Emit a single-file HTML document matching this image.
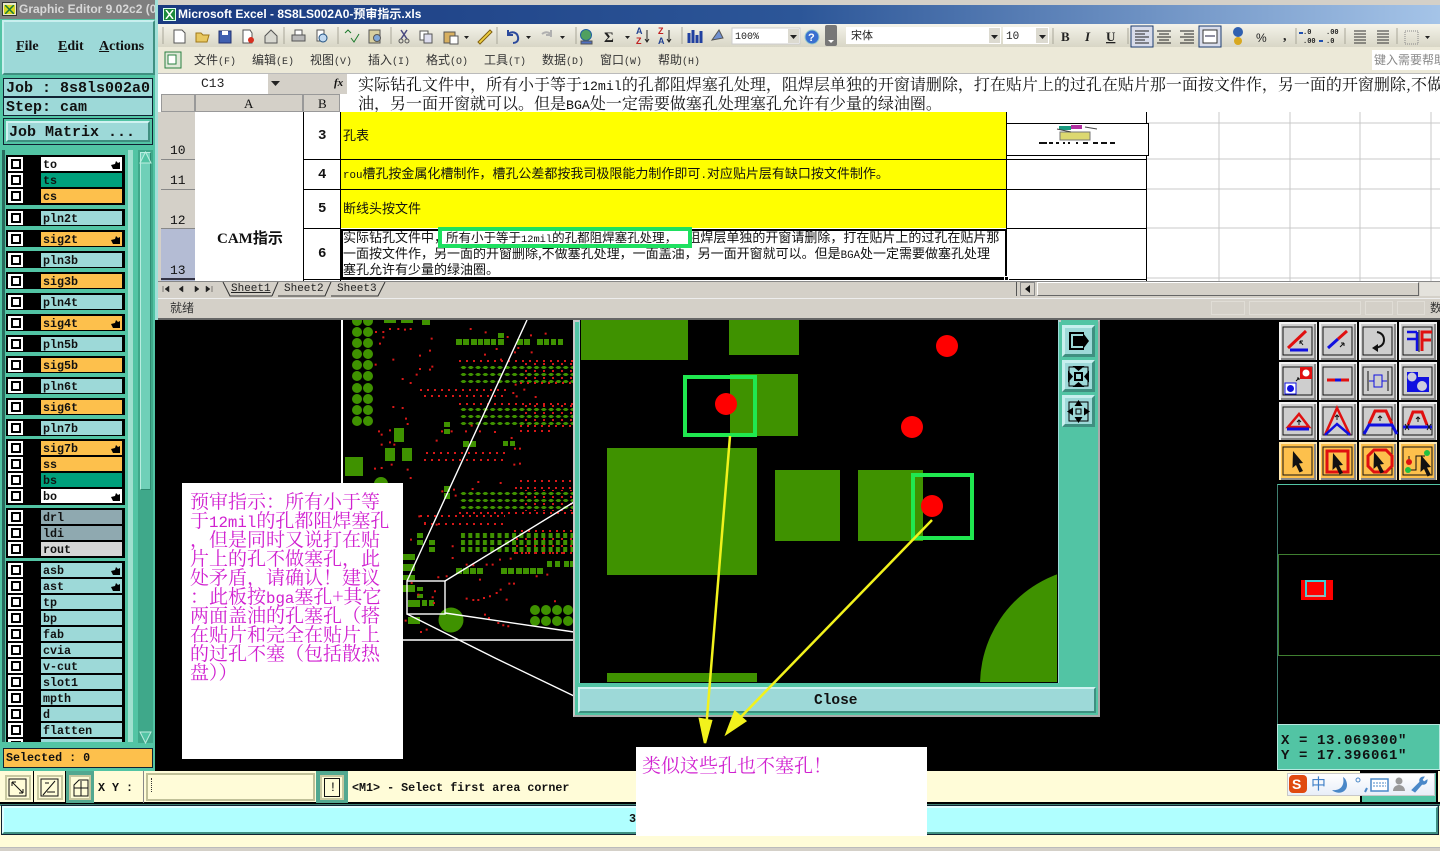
<!DOCTYPE html>
<html><head><meta charset="utf-8"><style>
html,body{margin:0;padding:0;background:#000}
#r{position:relative;width:1440px;height:851px;overflow:hidden;background:#000;font-family:"Liberation Mono",monospace}
#r div,#r span.a,#r svg.a{position:absolute;box-sizing:border-box}
.m{font-family:"Liberation Mono",monospace;font-weight:bold;color:#111;white-space:pre}
.c{font-family:"Liberation Serif","Noto Serif CJK SC",serif;color:#111;white-space:nowrap}
.s{font-family:"Liberation Sans","Noto Sans CJK SC",sans-serif;color:#222;white-space:nowrap}
i.l{font-style:normal;font-family:"Liberation Mono",monospace;font-size:.83em;line-height:0}
.cb{left:2px;width:15px;height:14px;background:#fff}
.cb:after{content:"";position:absolute;left:3px;top:2px;width:10px;height:10px;border:2px solid #000;box-sizing:border-box;background:#fff}
.lb{left:35px;width:81px;height:14px;font:bold 11.7px/16px "Liberation Mono",monospace;color:#111;padding-left:2px;white-space:pre;background:#9dd9d8;overflow:hidden}
.g{left:6px;width:119px;background:#000}
.or{background:#fdc04c!important}.wh{background:#fff!important}.gr{background:#00a07c!important}.gy{background:#8fa9b0!important}.lg{background:#d6d6d6!important}
.hd{position:absolute;right:2px;top:3px;width:9px;height:9px}
.t12{font-size:12px;line-height:16px;font-family:'Noto Sans CJK SC',sans-serif;color:#333}
.t13{font-size:13px;line-height:16px;font-family:'Noto Sans CJK SC',sans-serif;color:#111}
</style></head><body><div id="r">

<!-- LEFT PANEL -->
<div style="left:0;top:0;width:158px;height:771px;background:#52c4a4"></div>
<div style="left:0;top:0;width:158px;height:19px;background:#7f7f7f"></div>
<div style="left:2px;top:2px;width:15px;height:14px;background:#e8e8c8;border:1px solid #333"></div>
<div class="s" style="left:4px;top:5px;width:11px;height:9px;background:#d8d820"></div>
<svg class="a" style="left:5px;top:5px" width="9" height="9"><path d="M0 0l9 9M9 0L0 9" stroke="#1a7a3a" stroke-width="1.500"/></svg>
<div class="s" style="left:19px;top:1px;font:bold 12px/17px 'Liberation Sans',sans-serif;color:#d8d8d8;width:137px;overflow:hidden">Graphic Editor 9.02c2 (0</div>
<div style="left:2px;top:20px;width:153px;height:55px;background:#9dd9d8;border:2px solid;border-color:#c8efee #3f8f80 #3f8f80 #c8efee"></div>
<div class="c" style="left:16px;top:38px;font-size:14px;font-weight:bold;line-height:18px"><u>F</u>ile</div>
<div class="c" style="left:58px;top:38px;font-size:14px;font-weight:bold;line-height:18px"><u>E</u>dit</div>
<div class="c" style="left:99px;top:38px;font-size:14px;font-weight:bold;line-height:18px"><u>A</u>ctions</div>
<div style="left:3px;top:78px;width:150px;height:19px;background:#9dd9d8;border:1px solid #123"></div>
<div class="m" style="left:6px;top:79px;font-size:15px;line-height:19px">Job : 8s8ls002a0</div>
<div style="left:3px;top:97px;width:150px;height:19px;background:#9dd9d8;border:1px solid #123"></div>
<div class="m" style="left:6px;top:98px;font-size:15px;line-height:19px">Step: cam</div>
<div style="left:3px;top:118px;width:150px;height:27px;background:#52c4a4;border:1px solid #123"></div>
<div style="left:6px;top:121px;width:144px;height:21px;background:#9dd9d8;border:2px solid;border-color:#d0f2f1 #3f8f80 #3f8f80 #d0f2f1"></div>
<div class="m" style="left:9px;top:123px;font-size:15px;line-height:19px">Job Matrix ...</div>

<div style="left:2px;top:150px;width:3px;height:592px;background:#2a6a5e"></div>
<div style="left:128px;top:150px;width:5px;height:592px;background:#9fe0cf"></div>
<div style="left:138px;top:150px;width:15px;height:593px;background:#3fa88a"></div>
<div style="left:140px;top:152px;width:11px;height:338px;background:#6fd0b8;border:1px solid;border-color:#b8eee0 #2d8a70 #2d8a70 #b8eee0"></div>
<svg class="a" style="left:139px;top:151px" width="13" height="13"><path d="M6.5 1L12 12H1z" fill="#52c4a4" stroke="#bdeee0"/></svg>
<svg class="a" style="left:139px;top:731px" width="13" height="13"><path d="M6.5 12L12 1H1z" fill="#52c4a4" stroke="#bdeee0"/></svg>

<div style="left:0;top:150px;width:126px;height:592px;overflow:hidden">
<div class="g" style="top:5px;height:50px"><div class="cb" style="top:2px"></div><div class="lb wh" style="top:2px">to<svg class="hd" viewBox="0 0 9 9"><path d="M0 5l4-1 1-3 2 2 2-1v7H2z"/></svg></div><div class="cb" style="top:18px"></div><div class="lb gr" style="top:18px">ts</div><div class="cb" style="top:34px"></div><div class="lb or" style="top:34px">cs</div></div>
<div class="g" style="top:59px;height:17px"><div class="cb" style="top:2px"></div><div class="lb" style="top:2px">pln2t</div></div>
<div class="g" style="top:80px;height:17px"><div class="cb" style="top:2px"></div><div class="lb or" style="top:2px">sig2t<svg class="hd" viewBox="0 0 9 9"><path d="M0 5l4-1 1-3 2 2 2-1v7H2z"/></svg></div></div>
<div class="g" style="top:101px;height:17px"><div class="cb" style="top:2px"></div><div class="lb" style="top:2px">pln3b</div></div>
<div class="g" style="top:122px;height:17px"><div class="cb" style="top:2px"></div><div class="lb or" style="top:2px">sig3b</div></div>
<div class="g" style="top:143px;height:17px"><div class="cb" style="top:2px"></div><div class="lb" style="top:2px">pln4t</div></div>
<div class="g" style="top:164px;height:17px"><div class="cb" style="top:2px"></div><div class="lb or" style="top:2px">sig4t<svg class="hd" viewBox="0 0 9 9"><path d="M0 5l4-1 1-3 2 2 2-1v7H2z"/></svg></div></div>
<div class="g" style="top:185px;height:17px"><div class="cb" style="top:2px"></div><div class="lb" style="top:2px">pln5b</div></div>
<div class="g" style="top:206px;height:17px"><div class="cb" style="top:2px"></div><div class="lb or" style="top:2px">sig5b</div></div>
<div class="g" style="top:227px;height:17px"><div class="cb" style="top:2px"></div><div class="lb" style="top:2px">pln6t</div></div>
<div class="g" style="top:248px;height:17px"><div class="cb" style="top:2px"></div><div class="lb or" style="top:2px">sig6t</div></div>
<div class="g" style="top:269px;height:17px"><div class="cb" style="top:2px"></div><div class="lb" style="top:2px">pln7b</div></div>
<div class="g" style="top:289px;height:66px"><div class="cb" style="top:2px"></div><div class="lb or" style="top:2px">sig7b<svg class="hd" viewBox="0 0 9 9"><path d="M0 5l4-1 1-3 2 2 2-1v7H2z"/></svg></div><div class="cb" style="top:18px"></div><div class="lb or" style="top:18px">ss</div><div class="cb" style="top:34px"></div><div class="lb gr" style="top:34px">bs</div><div class="cb" style="top:50px"></div><div class="lb wh" style="top:50px">bo<svg class="hd" viewBox="0 0 9 9"><path d="M0 5l4-1 1-3 2 2 2-1v7H2z"/></svg></div></div>
<div class="g" style="top:358px;height:50px"><div class="cb" style="top:2px"></div><div class="lb gy" style="top:2px">drl</div><div class="cb" style="top:18px"></div><div class="lb gy" style="top:18px">ldi</div><div class="cb" style="top:34px"></div><div class="lb lg" style="top:34px">rout</div></div>
<div class="g" style="top:411px;height:190px">
<div class="cb" style="top:2px"></div><div class="lb" style="top:2px">asb<svg class="hd" viewBox="0 0 9 9"><path d="M0 5l4-1 1-3 2 2 2-1v7H2z"/></svg></div>
<div class="cb" style="top:18px"></div><div class="lb" style="top:18px">ast<svg class="hd" viewBox="0 0 9 9"><path d="M0 5l4-1 1-3 2 2 2-1v7H2z"/></svg></div>
<div class="cb" style="top:34px"></div><div class="lb" style="top:34px">tp</div>
<div class="cb" style="top:50px"></div><div class="lb" style="top:50px">bp</div>
<div class="cb" style="top:66px"></div><div class="lb" style="top:66px">fab</div>
<div class="cb" style="top:82px"></div><div class="lb" style="top:82px">cvia</div>
<div class="cb" style="top:98px"></div><div class="lb" style="top:98px">v-cut</div>
<div class="cb" style="top:114px"></div><div class="lb" style="top:114px">slot1</div>
<div class="cb" style="top:130px"></div><div class="lb" style="top:130px">mpth</div>
<div class="cb" style="top:146px"></div><div class="lb" style="top:146px">d</div>
<div class="cb" style="top:162px"></div><div class="lb" style="top:162px">flatten</div>
<div class="cb" style="top:178px"></div><div class="lb" style="top:178px"></div>
</div></div>
<div style="left:3px;top:748px;width:150px;height:20px;background:#fdc04c;border:1px solid #123"></div>
<div class="m" style="left:6px;top:749px;font-size:11.7px;line-height:19px">Selected : 0</div>

<!-- EXCEL -->
<div style="left:155px;top:0;width:1285px;height:320px;background:#d4d0c8"></div>
<div style="left:155px;top:0;width:3px;height:320px;background:#a0e0d8"></div>
<div style="left:158px;top:5px;width:1282px;height:19px;background:linear-gradient(90deg,#1a3a80 0%,#2c5698 50%,#a5c4e8 100%)"></div>
<div style="left:163px;top:8px;width:13px;height:13px;background:#1d8a3c;border:1px solid #dfe"></div>
<svg class="a" style="left:165px;top:10px" width="9" height="9"><path d="M1 0l7 9M8 0L1 9" stroke="#fff" stroke-width="1.500"/></svg>
<div class="s" style="left:178px;top:6px;color:#fff;font-size:12px;line-height:17px;font-weight:bold">Microsoft Excel - 8S8LS002A0-预审指示.xls</div>
<div style="left:158px;top:24px;width:1282px;height:23px;background:linear-gradient(#f4f3ea,#d8d6c6)"></div>
<div style="left:158px;top:47px;width:1282px;height:26px;background:#ece9d8"></div>
<svg class="a" style="left:158px;top:24px" width="1282" height="50" viewBox="158 24 1282 50">
<g fill="none" stroke="#555" stroke-width="1">
<path d="M174 30h8l3 3v10h-11z" fill="#fff"/>
<path d="M196 42V33h5l2 2h6l-2 7z" fill="#e8c860" stroke="#a07818"/>
<rect x="219" y="31" width="12" height="12" fill="#4060b0" stroke="#203070"/><rect x="222" y="31" width="6" height="4" fill="#fff" stroke="none"/>
<path d="M243 30h7l2 3v10h-9z" fill="#fff"/><circle cx="251" cy="40" r="3" fill="#d83020" stroke="none"/>
<path d="M265 36l6-6 6 6v7h-12z" fill="#d8d8d0"/>
<rect x="292" y="35" width="13" height="6" fill="#b8b8b8"/><rect x="295" y="30" width="7" height="5" fill="#fff"/>
<path d="M317 30h7v11h-7z" fill="#fff"/><circle cx="323" cy="38" r="4" fill="#c0d8f0" stroke="#205080"/>
<path d="M345 33l3-3 3 3M351 38l3 4 5-8" stroke="#1c7a2c"/>
<rect x="369" y="30" width="11" height="13" fill="#d8d0a0"/><circle cx="377" cy="38" r="3.5" fill="#80a8d8"/>
<path d="M401 30l6 9M407 30l-6 9" stroke="#4a4a80" stroke-width="1.5"/><circle cx="401" cy="41" r="2"/><circle cx="407" cy="41" r="2"/>
<rect x="420" y="31" width="8" height="9" fill="#fff"/><rect x="424" y="34" width="8" height="9" fill="#dde"/>
<rect x="444" y="32" width="11" height="11" fill="#d8b060"/><rect x="450" y="36" width="8" height="8" fill="#fff"/>
<path d="M478 42l4-4 8-8 2 2-8 8-4 4z" fill="#f0d040" stroke="#806010"/>
<path d="M508 34c4-3 9-2 10 3s-3 6-5 6M508 30v5h5" stroke="#2c4a9c" stroke-width="2"/>
<path d="M542 34c4-3 9-2 9 3M551 30v5h-5" stroke="#b0b0b0" stroke-width="2"/>
<circle cx="586" cy="35" r="5.5" fill="#50a060" stroke="#2060a0"/><rect x="581" y="41" width="11" height="3" fill="#5070c0"/>
<path d="M689 43V33M693 43V30M697 43V35M701 43V31" stroke="#2040a0" stroke-width="3"/>
<path d="M712 40l7-10 4 8z" fill="#7090d0"/>
</g>
<g fill="#222" font-family="Liberation Serif" font-weight="bold" font-size="15"><text x="604" y="42">Σ</text></g>
<g font-family="Liberation Sans" font-size="9" fill="#204090" font-weight="bold"><text x="636" y="34">A</text><text x="636" y="44" fill="#c02020">Z</text><text x="658" y="34" fill="#c02020">Z</text><text x="658" y="44">A</text></g>
<path d="M647 30v12M645 39l2 3 2-3M669 30v12M667 39l2 3 2-3" stroke="#222" fill="none"/>
<g fill="#222"><path d="M464 36h5l-2.500 3zM526 36h5l-2.500 3zM560 36h5l-2.500 3zM625 36h5l-2.500 3zM1425 36h5l-2.500 3z"/></g>
<g stroke="#a8a698"><path d="M163 27v17M284 27v17M338 27v17M391 27v17M497 27v17M576 27v17M682 27v17M1053 28v16M1128 28v16M1220 28v16M1296 28v16M1345 28v16M1397 28v16"/></g>
<rect x="732" y="28" width="68" height="16" fill="#fff" stroke="#ccc"/><rect x="788" y="29" width="11" height="14" fill="#dcdad0"/><path d="M790 35h7l-3.500 4z" fill="#222"/>
<text x="735" y="39" font-family="Liberation Mono" font-size="10" fill="#222">100%</text>
<circle cx="812" cy="37" r="7" fill="#3a70d0" stroke="#9cc"/><text x="808" y="41" font-family="Liberation Sans" font-weight="bold" font-size="11" fill="#fff">?</text>
<rect x="825" y="25" width="12" height="21" rx="2" fill="#777"/><path d="M828 40h6l-3 3z" fill="#fff"/>
<rect x="846" y="27" width="155" height="17" fill="#fff"/><rect x="989" y="28" width="11" height="15" fill="#dcdad0"/><path d="M991 35h7l-3.500 4z" fill="#222"/>
<text x="851" y="39" font-family="Noto Sans CJK SC" font-size="11" fill="#222">宋体</text>
<rect x="1003" y="27" width="46" height="17" fill="#fff"/><rect x="1036" y="28" width="12" height="15" fill="#dcdad0"/><path d="M1039 35h7l-3.500 4z" fill="#222"/>
<text x="1006" y="39" font-family="Liberation Mono" font-size="11" fill="#222">10</text>
<g font-family="Liberation Serif" font-size="13" font-weight="bold" fill="#222"><text x="1061" y="41">B</text><text x="1085" y="41" font-style="italic">I</text><text x="1106" y="41" text-decoration="underline">U</text></g>
<rect x="1131" y="26" width="22" height="21" fill="#d8dcea" stroke="#1c3c70"/><rect x="1199" y="26" width="22" height="21" fill="#d8dcea" stroke="#1c3c70"/>
<path d="M1135 31h14M1135 34h10M1135 37h14M1135 40h10M1135 43h14M1157 31h14M1159 34h10M1157 37h14M1159 40h10M1157 43h14M1180 31h14M1184 34h10M1180 37h14M1184 40h10M1180 43h14" stroke="#222"/>
<rect x="1203" y="30" width="14" height="13" fill="#fff" stroke="#333"/><path d="M1205 36h10" stroke="#224"/>
<circle cx="1238" cy="32" r="5" fill="#3060b0"/><circle cx="1238" cy="41" r="4" fill="#d8a820"/>
<text x="1256" y="42" font-family="Liberation Sans" font-size="12" fill="#222">%</text>
<text x="1283" y="40" font-family="Liberation Serif" font-weight="bold" font-size="14" fill="#222">,</text>
<g font-family="Liberation Mono" font-size="7" fill="#222" font-weight="bold"><text x="1303" y="34">.0</text><text x="1303" y="43">.00</text><text x="1326" y="34">.00</text><text x="1326" y="43">.0</text></g>
<path d="M1299 33h4M1319 41h4" stroke="#2050b0" stroke-width="2"/>
<path d="M1354 31h12M1354 34h12M1354 37h12M1354 40h12M1354 43h12M1377 31h12M1377 34h12M1377 37h12M1377 40h12M1377 43h12" stroke="#333"/>
<rect x="1405" y="31" width="13" height="13" fill="none" stroke="#888" stroke-dasharray="1 1"/>
<rect x="165" y="52" width="16" height="16" fill="#dfe8d8" stroke="#2a8040"/><rect x="168" y="55" width="8" height="9" fill="#fff" stroke="#2a8040"/>
</svg>
<div class="c t12" style="left:194px;top:52px">文件<i class="l">(F)</i></div>
<div class="c t12" style="left:252px;top:52px">编辑<i class="l">(E)</i></div>
<div class="c t12" style="left:310px;top:52px">视图<i class="l">(V)</i></div>
<div class="c t12" style="left:368px;top:52px">插入<i class="l">(I)</i></div>
<div class="c t12" style="left:426px;top:52px">格式<i class="l">(O)</i></div>
<div class="c t12" style="left:484px;top:52px">工具<i class="l">(T)</i></div>
<div class="c t12" style="left:542px;top:52px">数据<i class="l">(D)</i></div>
<div class="c t12" style="left:600px;top:52px">窗口<i class="l">(W)</i></div>
<div class="c t12" style="left:658px;top:52px">帮助<i class="l">(H)</i></div>
<div style="left:1372px;top:50px;width:68px;height:20px;background:#fff"></div>
<div class="c t12" style="left:1374px;top:52px;color:#888;width:66px;overflow:hidden">键入需要帮助</div>

<!-- Formula bar -->
<div style="left:158px;top:73px;width:1282px;height:39px;background:#fff;border-top:1px solid #bbb"></div>
<div style="left:161px;top:74px;width:107px;height:18px;background:#fff"></div>
<div class="s" style="left:201px;top:75px;font:13px/18px 'Liberation Mono',monospace">C13</div>
<div style="left:268px;top:74px;width:82px;height:20px;background:#d4d0c8"></div>
<svg class="a" style="left:270px;top:80px" width="12" height="8"><path d="M1 1h9L5.500 6z" fill="#222"/></svg>
<div class="c" style="left:334px;top:75px;font:italic bold 11px/16px 'Liberation Serif',serif">fx</div>
<div style="left:347px;top:74px;width:1093px;height:38px;background:#fff"></div>
<div class="c" style="left:358px;top:74px;font-size:16px;line-height:19px;font-family:'Noto Serif CJK SC',serif;width:1082px;overflow:hidden">实际钻孔文件中，所有小于等于<i class="l">12mil</i>的孔都阻焊塞孔处理，阻焊层单独的开窗请删除，打在贴片上的过孔在贴片那一面按文件作，另一面的开窗删除,不做<br>油，另一面开窗就可以。但是<i class="l">BGA</i>处一定需要做塞孔处理塞孔允许有少量的绿油圈。</div>

<!-- Sheet -->
<div style="left:161px;top:94px;width:34px;height:18px;background:#d4d0c8;border:1px solid #999"></div>
<div style="left:195px;top:94px;width:108px;height:18px;background:#d4d0c8;border:1px solid #999"></div>
<div style="left:303px;top:94px;width:37px;height:18px;background:#d4d0c8;border:1px solid #999"></div>
<div class="c" style="left:244px;top:96px;font:13px/16px 'Liberation Serif',serif">A</div>
<div class="c" style="left:318px;top:96px;font:13px/16px 'Liberation Serif',serif">B</div>
<div style="left:161px;top:112px;width:1279px;height:169px;background:#fff"></div>
<div style="left:161px;top:112px;width:34px;height:117px;background:#d4d0c8"></div>
<div style="left:161px;top:229px;width:34px;height:52px;background:#b4bcd4"></div>
<div style="left:161px;top:159px;width:34px;height:1px;background:#888"></div>
<div style="left:161px;top:189px;width:34px;height:1px;background:#888"></div>
<div style="left:161px;top:228px;width:34px;height:1px;background:#888"></div>
<div style="left:161px;top:278px;width:34px;height:2px;background:#334"></div>
<div class="c" style="left:170px;top:143px;font:13px/16px 'Liberation Mono',monospace">10</div>
<div class="c" style="left:170px;top:173px;font:13px/16px 'Liberation Mono',monospace">11</div>
<div class="c" style="left:170px;top:213px;font:13px/16px 'Liberation Mono',monospace">12</div>
<div class="c" style="left:170px;top:263px;font:13px/16px 'Liberation Mono',monospace">13</div>
<div class="c" style="left:217px;top:229px;font-size:15px;line-height:20px;font-weight:bold;font-family:'Liberation Serif','Noto Sans CJK SC',serif">CAM指示</div>
<div style="left:303px;top:112px;width:1px;height:169px;background:#000"></div>
<div style="left:340px;top:112px;width:1px;height:169px;background:#000"></div>
<div style="left:304px;top:159px;width:703px;height:1px;background:#000"></div>
<div style="left:304px;top:189px;width:703px;height:1px;background:#000"></div>
<div style="left:304px;top:228px;width:36px;height:1px;background:#000"></div>
<div style="left:304px;top:279px;width:843px;height:1px;background:#000"></div>
<div style="left:341px;top:112px;width:665px;height:47px;background:#ff0"></div>
<div style="left:341px;top:160px;width:665px;height:29px;background:#ff0"></div>
<div style="left:341px;top:190px;width:665px;height:38px;background:#ff0"></div>
<div style="left:1006px;top:112px;width:1px;height:169px;background:#000"></div>
<div style="left:1146px;top:112px;width:1px;height:169px;background:#000"></div>
<div style="left:1007px;top:228px;width:140px;height:1px;background:#000"></div>
<div style="left:1007px;top:159px;width:140px;height:1px;background:#000"></div>
<div style="left:1007px;top:189px;width:140px;height:1px;background:#000"></div>
<svg class="a" style="left:1147px;top:112px" width="293" height="169"><g stroke="#c8c8c8"><path d="M72 0v169M143 0v169M213 0v169M284 0v169M0 11h293M0 47h293M0 77h293M0 116h293M0 166h293"/></g></svg>
<div style="left:1006px;top:123px;width:143px;height:33px;background:#fff;border:1px solid #000"></div>
<svg class="a" style="left:1035px;top:124px" width="85" height="24"><rect x="25" y="8" width="30" height="8" fill="#dcd870" stroke="#777"/><rect x="24" y="2" width="12" height="4" fill="#1a9a80"/><rect x="36" y="1" width="11" height="4" fill="#b030a0"/><path d="M22 5l14 3M50 3l12 2" stroke="#444"/><path d="M4 19h8M14 19h4M21 19h3M28 19h2M33 19h2M41 19h2M48 19h5M58 19h5M66 19h6M75 19h5" stroke="#111" stroke-width="2"/></svg>
<div class="c" style="left:318px;top:127px;font:bold 14px/18px 'Liberation Mono',monospace">3</div>
<div class="c" style="left:318px;top:166px;font:bold 14px/18px 'Liberation Mono',monospace">4</div>
<div class="c" style="left:318px;top:200px;font:bold 14px/18px 'Liberation Mono',monospace">5</div>
<div class="c" style="left:318px;top:245px;font:bold 14px/18px 'Liberation Mono',monospace">6</div>
<div class="c t13" style="left:343px;top:127px">孔表</div>
<div class="c t13" style="left:343px;top:165px"><i class="l">rou</i>槽孔按金属化槽制作，槽孔公差都按我司极限能力制作即可<i class="l">.</i>对应贴片层有缺口按文件制作。</div>
<div class="c t13" style="left:343px;top:200px">断线头按文件</div>
<div style="left:341px;top:229px;width:666px;height:50px;background:#fff;border:2px solid #000"></div>
<div class="c t13" style="left:343px;top:229px">实际钻孔文件中，所有小于等于<i class="l">12mil</i>的孔都阻焊塞孔处理，阻焊层单独的开窗请删除，打在贴片上的过孔在贴片那<br>一面按文件作，另一面的开窗删除,不做塞孔处理，一面盖油，另一面开窗就可以。但是<i class="l">BGA</i>处一定需要做塞孔处理<br>塞孔允许有少量的绿油圈。</div>
<div style="left:438px;top:227px;width:254px;height:21px;background:#fff;border:4px solid #1ee060"></div>
<div class="c t13" style="left:446px;top:229px;font-size:12.500px">所有小于等于<i class="l">12mil</i>的孔都阻焊塞孔处理，</div>
<div style="left:1004px;top:276px;width:5px;height:5px;background:#000;border:1px solid #fff"></div>

<!-- tabs -->
<div style="left:158px;top:281px;width:1282px;height:17px;background:#d4d0c8;border-top:1px solid #888"></div>
<svg class="a" style="left:160px;top:283px" width="60" height="12"><path d="M3 3v6M9 3L5 6l4 3zM23 3l-4 3 4 3zM35 3l4 3-4 3zM52 3v6M46 3l4 3-4 3z" fill="#222" stroke="#222" stroke-width=".5"/></svg>
<svg class="a" style="left:222px;top:282px" width="170" height="16"><path d="M1 0l7 14h42M50 14l6-14M56 14h47l6-14M109 14h47l7-14" fill="none" stroke="#333"/></svg>
<div class="s" style="left:231px;top:282px;font:11px/14px 'Liberation Mono',monospace;text-decoration:underline">Sheet1</div>
<div class="s" style="left:284px;top:282px;font:11px/14px 'Liberation Mono',monospace">Sheet2</div>
<div class="s" style="left:337px;top:282px;font:11px/14px 'Liberation Mono',monospace">Sheet3</div>
<div style="left:1016px;top:282px;width:1px;height:14px;background:#555"></div>
<div style="left:1020px;top:282px;width:15px;height:14px;border:1px solid #888"></div>
<svg class="a" style="left:1024px;top:285px" width="8" height="9"><path d="M6 0L1 4l5 4z" fill="#111"/></svg>
<div style="left:1037px;top:282px;width:382px;height:14px;background:#d4d0c8;border:1px solid;border-color:#fff #666 #666 #fff"></div>
<div style="left:1420px;top:282px;width:20px;height:14px;background:#e4e2dc"></div>
<div style="left:158px;top:298px;width:1282px;height:21px;background:#d4d0c8;border-top:1px solid #eee"></div>
<div style="left:158px;top:318px;width:1282px;height:2px;background:#666"></div>
<div class="c t12" style="left:170px;top:300px">就绪</div>
<div style="left:1211px;top:301px;width:34px;height:14px;border:1px solid #e0ddd6"></div>
<div style="left:1249px;top:301px;width:112px;height:14px;border:1px solid #e0ddd6"></div>
<div style="left:1365px;top:301px;width:28px;height:14px;border:1px solid #e0ddd6"></div>
<div style="left:1397px;top:301px;width:28px;height:14px;border:1px solid #e0ddd6"></div>
<div class="c t12" style="left:1430px;top:300px;width:10px;overflow:hidden">数</div>

<!-- PCB -->
<svg class="a" style="left:155px;top:320px" width="420" height="451" viewBox="155 320 420 451">
<defs>
<pattern id="p1" x="460" y="0" width="7.300" height="7" patternUnits="userSpaceOnUse"><path d="M.5 3.500L2.500 2h2l2 1.500-2 1.500h-2z" fill="#3f9200"/></pattern>
<pattern id="p2" x="460" y="0" width="7.300" height="7" patternUnits="userSpaceOnUse"><rect x="1" y="1" width="4" height="5" fill="#3f9200"/></pattern>
<pattern id="p4" x="0" y="3" width="9" height="7" patternUnits="userSpaceOnUse"><rect x="3" y="3" width="2" height="2" fill="#d01818"/></pattern>
</defs>
<rect x="155" y="320" width="420" height="451" fill="#000"/>
<rect x="341" y="320" width="2" height="163" fill="#fff"/>
<g fill="#3f9200">
<circle cx="357" cy="321" r="5"/><circle cx="368" cy="321" r="5"/><circle cx="357" cy="332" r="5"/><circle cx="368" cy="332" r="5"/><circle cx="357" cy="343" r="5"/><circle cx="368" cy="343" r="5"/><circle cx="357" cy="354" r="5"/><circle cx="368" cy="354" r="5"/><circle cx="357" cy="365" r="5"/><circle cx="368" cy="365" r="5"/><circle cx="357" cy="376" r="5"/><circle cx="368" cy="376" r="5"/><circle cx="357" cy="388" r="5"/><circle cx="368" cy="388" r="5"/><circle cx="357" cy="399" r="5"/><circle cx="368" cy="399" r="5"/><circle cx="357" cy="410" r="5"/><circle cx="368" cy="410" r="5"/><circle cx="357" cy="421" r="5"/><circle cx="368" cy="421" r="5"/>
<rect x="384" y="320" width="12" height="3"/><rect x="401" y="320" width="12" height="3"/><rect x="422" y="320" width="8" height="5"/>
<rect x="456" y="339" width="6" height="6"/><rect x="463" y="339" width="6" height="6"/><rect x="471" y="339" width="6" height="6"/><rect x="478" y="339" width="5" height="6"/><rect x="484" y="339" width="6" height="6"/><rect x="491" y="339" width="5" height="6"/><rect x="498" y="339" width="6" height="6"/><rect x="498" y="333" width="6" height="5"/>
<rect x="517" y="339" width="6" height="6"/><rect x="524" y="339" width="6" height="6"/><rect x="537" y="339" width="6" height="6"/><rect x="544" y="339" width="5" height="6"/><rect x="551" y="339" width="5" height="6"/><rect x="558" y="339" width="5" height="6"/>
<rect x="444" y="422" width="6" height="5"/><rect x="444" y="429" width="6" height="5"/>
<rect x="394" y="428" width="10" height="14"/><rect x="385" y="448" width="10" height="13"/><rect x="402" y="448" width="10" height="13"/><rect x="345" y="457" width="18" height="19"/>
<rect x="463" y="441" width="6" height="6"/><rect x="470" y="441" width="6" height="6"/><rect x="503" y="441" width="5" height="5"/><rect x="510" y="441" width="5" height="5"/>
<circle cx="381" cy="484" r="7"/>
<rect x="444" y="486" width="6" height="6"/><rect x="444" y="493" width="6" height="6"/>
<rect x="459" y="363" width="114" height="21" fill="url(#p1)"/><rect x="459" y="405" width="114" height="21" fill="url(#p1)"/><rect x="459" y="489" width="114" height="21" fill="url(#p1)"/><rect x="460" y="532" width="113" height="21" fill="url(#p2)"/>
<rect x="417" y="533" width="6" height="5"/><rect x="417" y="540" width="6" height="5"/><rect x="429" y="540" width="6" height="5"/><rect x="429" y="547" width="6" height="5"/>
<rect x="456" y="568" width="6" height="6"/><rect x="463" y="568" width="6" height="6"/><rect x="470" y="568" width="6" height="6"/><rect x="477" y="568" width="6" height="6"/>
<rect x="501" y="568" width="6" height="6"/><rect x="508" y="568" width="6" height="6"/><rect x="516" y="568" width="6" height="6"/><rect x="523" y="568" width="6" height="6"/><rect x="530" y="568" width="6" height="6"/><rect x="537" y="568" width="6" height="6"/>
<rect x="547" y="561" width="5" height="6"/><rect x="555" y="561" width="5" height="6"/><rect x="564" y="561" width="5" height="6"/><rect x="570" y="561" width="4" height="6"/>
<rect x="403" y="554" width="12" height="6"/><rect x="403" y="564" width="12" height="7"/><rect x="403" y="575" width="12" height="5"/><rect x="403" y="585" width="12" height="7"/>
<rect x="417" y="587" width="6" height="4"/><rect x="417" y="594" width="6" height="4"/>
<rect x="408" y="600" width="12" height="7"/><rect x="422" y="600" width="5" height="6"/><rect x="429" y="600" width="5" height="6"/>
<rect x="408" y="617" width="12" height="7"/>
<circle cx="451" cy="620" r="12.500"/>
<circle cx="535" cy="610" r="5"/><circle cx="546" cy="610" r="5"/><circle cx="557" cy="610" r="5"/><circle cx="568" cy="610" r="5"/>
<circle cx="535" cy="621" r="5"/><circle cx="546" cy="621" r="5"/><circle cx="557" cy="621" r="5"/><circle cx="568" cy="621" r="5"/>
</g>
<g stroke="#d81818" stroke-width="2" stroke-dasharray="2 5" fill="none"><path d="M420 390H508M424 396H508M426 453H505M424 460H508M420 516H505M424 524H508M459 361H573M520 383H573M459 404H573M520 426H573M520 431H555M520 481H573M520 488H573M459 513H573M514 531H573M514 553H573"/></g>
<rect x="520" y="362" width="53" height="21" fill="url(#p4)"/><rect x="520" y="405" width="53" height="21" fill="url(#p4)"/><rect x="520" y="490" width="53" height="21" fill="url(#p4)"/><rect x="510" y="533" width="63" height="21" fill="url(#p4)"/>
<g transform="translate(340 318) scale(.3333)"><path fill="none" stroke="#d81818" stroke-width="6" stroke-linecap="butt" d="M105 42h6M127 42h6M147 33h6M172 33h6M192 35h6M209 33h6M117 77h6M127 58h6M104 140h6M157 125h6M237 113h6M267 98h6M272 62h6M389 33h6M434 43h6M467 93h6M500 57h6M532 90h6M570 52h6M614 47h6M432 110h6M480 125h6M522 103h6M572 103h6M227 170h6M237 153h6M267 155h6M274 146h6M185 183h6M209 195h6M524 200h6M550 215h6M517 225h6M527 235h6M584 237h6M157 267h6M185 270h6M195 302h6M200 318h6M114 340h6M122 350h6M122 380h6M147 373h6M160 380h6M147 337h6M287 368h6M303 340h6M332 340h6M375 340h6M392 323h6M417 340h6M462 342h6M512 360h6M522 392h6M537 392h6M520 440h6M537 437h6M102 452h6M122 450h6M152 440h6M200 455h6M209 480h6M304 520h6M339 515h6M344 533h6M412 492h6M479 495h6M525 510h6M395 513h6M235 595h6M252 615h6M287 620h6M210 665h6M335 685h6M335 720h6M377 740h6M397 742h6M437 740h6M455 740h6M477 725h6M509 722h6M505 797h6M519 797h6M619 770h6M587 775h6M292 778h6M317 775h6M417 785h6M497 845h6M377 842h6M397 846h6M412 846h6M429 840h6M447 835h6M467 825h6M479 815h6M432 890h6M444 900h6M472 915h6M487 922h6M502 925h6M642 850h6M194 908h6M240 942h6M257 935h6M212 795h6M232 830h6M282 820h6M275 838h6M279 855h6"/></g>
<g fill="none" stroke="#fff" stroke-width="1.400"><path d="M407 581L527 320M445 581L574 502M407 614L495 658L574 696M445 613L574 632"/><rect x="407" y="581" width="38" height="33"/><path d="M403 640H574"/></g>
</svg>

<!-- pink note -->
<div style="left:182px;top:483px;width:221px;height:276px;background:#fff"></div>
<div class="c" style="left:190px;top:491px;width:205px;font-size:19px;line-height:19px;color:#d020d0;font-family:'Noto Serif CJK SC',serif;white-space:nowrap">预审指示：所有小于等<br>于<i class="l">12mil</i>的孔都阻焊塞孔<br>，但是同时又说打在贴<br>片上的孔不做塞孔，此<br>处矛盾，请确认！建议<br>：此板按<i class="l">bga</i>塞孔+其它<br>两面盖油的孔塞孔（搭<br>在贴片和完全在贴片上<br>的过孔不塞（包括散热<br>盘））</div>

<!-- Dialog -->
<div style="left:573px;top:320px;width:527px;height:397px;background:#52c4a4;border:2px solid;border-color:#c8c8c8 #aaa #aaa #c8c8c8"></div>
<div style="left:579px;top:320px;width:480px;height:363px;background:#000;border-right:1px solid #9dd9d8;border-left:1px solid #9dd9d8"></div>
<svg class="a" style="left:580px;top:320px" width="477" height="362" viewBox="580 320 477 362">
<g fill="#3f9200"><rect x="581" y="320" width="107" height="40"/><rect x="729" y="320" width="70" height="35"/><rect x="730" y="374" width="68" height="62"/><rect x="607" y="448" width="150" height="127"/><rect x="775" y="470" width="65" height="71"/><rect x="858" y="470" width="65" height="71"/><rect x="607" y="673" width="150" height="9"/><circle cx="1098" cy="685" r="118"/></g>
<g fill="#f00"><circle cx="947" cy="346" r="11"/><circle cx="726" cy="404" r="11"/><circle cx="912" cy="427" r="11"/><circle cx="932" cy="506" r="11"/></g>
<g fill="none" stroke="#20e850" stroke-width="4"><rect x="685" y="377" width="70" height="58"/><rect x="913" y="475" width="59" height="63"/></g>
</svg>
<div style="left:1061px;top:320px;width:37px;height:395px;background:#52c4a4"></div>
<div style="left:1062px;top:325px;width:33px;height:32px;background:#9dd9d8;border:3px solid;border-color:#c8efee #3f8f80 #3f8f80 #c8efee"></div>
<div style="left:1062px;top:360px;width:33px;height:32px;background:#9dd9d8;border:3px solid;border-color:#c8efee #3f8f80 #3f8f80 #c8efee"></div>
<div style="left:1062px;top:395px;width:33px;height:32px;background:#9dd9d8;border:3px solid;border-color:#c8efee #3f8f80 #3f8f80 #c8efee"></div>
<svg class="a" style="left:1062px;top:325px" width="33" height="102" fill="#000"><path d="M7 7h15v2H9v14h13v2H7z"/><path d="M11 11h10v-3l6 8-6 8v-3H11z"/><g transform="translate(0 35)"><rect x="7" y="7" width="19" height="19" fill="none" stroke="#000"/><rect x="13" y="13" width="7" height="7" fill="none" stroke="#000" stroke-width="2"/><path d="M16.500 11l-6-5h12zM16.500 22l-6 5h12zM11 16.500l-5-6v12zM22 16.500l5-6v12z"/></g><g transform="translate(0 70)"><rect x="7" y="7" width="19" height="19" fill="none" stroke="#000"/><rect x="14" y="14" width="5" height="5" fill="none" stroke="#000"/><path d="M16.500 5l-4 6h8zM16.500 28l-4-6h8zM5 16.500l6-4v8zM28 16.500l-6-4v8z"/></g></svg>
<div style="left:578px;top:687px;width:518px;height:26px;background:#9dd9d8;border:2px solid;border-color:#d0f2f1 #3f8f80 #3f8f80 #d0f2f1"></div>
<div class="m" style="left:814px;top:693px;font-size:14.500px;line-height:17px">Close</div>

<!-- yellow arrows -->
<svg class="a" style="left:680px;top:430px" width="270" height="320" viewBox="680 430 270 320">
<g stroke="#f2f21c" stroke-width="2.500" fill="#f2f21c"><path d="M730 436L706 730"/><path d="M932 520L736 722"/><path d="M705 743l-5-24 11 2z"/><path d="M727 733l8-21 10 9z"/></g>
</svg>

<!-- bottom note -->
<div style="left:636px;top:747px;width:291px;height:89px;background:#fff;z-index:5"></div>
<div class="c" style="left:642px;top:755px;font-size:19px;line-height:20px;color:#d020d0;font-family:'Noto Serif CJK SC',serif;z-index:6">类似这些孔也不塞孔！</div>

<!-- Right tool panel -->
<div style="left:1277px;top:320px;width:163px;height:164px;background:#000"></div>
<svg class="a" style="left:1278px;top:321px" width="162" height="162" viewBox="0 0 162 162">
<g stroke="#f2f2f2" stroke-width="2"><g fill="#cecece"><rect x="2" y="2" width="36" height="36"/><rect x="42" y="2" width="36" height="36"/><rect x="82" y="2" width="36" height="36"/><rect x="122" y="2" width="36" height="36"/><rect x="2" y="42" width="36" height="36"/><rect x="42" y="42" width="36" height="36"/><rect x="82" y="42" width="36" height="36"/><rect x="122" y="42" width="36" height="36"/><rect x="2" y="82" width="36" height="36"/><rect x="42" y="82" width="36" height="36"/><rect x="82" y="82" width="36" height="36"/><rect x="122" y="82" width="36" height="36"/></g><g fill="#fdc04c" stroke="#ffe8b0"><rect x="2" y="122" width="36" height="36"/><rect x="42" y="122" width="36" height="36"/><rect x="82" y="122" width="36" height="36"/><rect x="122" y="122" width="36" height="36"/></g></g>
<g fill="none" stroke="#888" stroke-width="2"><path d="M37 3v35H3M77 3v35H43M117 3v35H83M157 3v35h-34M37 43v35H3M77 43v35H43M117 43v35H83M157 43v35h-34M37 83v35H3M77 83v35H43M117 83v35H83M157 83v35h-34M37 123v35H3M77 123v35H43M117 123v35H83M157 123v35h-34"/></g>
<g fill="none" stroke="#111" stroke-width="1"><rect x="5" y="6" width="29" height="28"/><rect x="45" y="6" width="29" height="28"/><rect x="85" y="6" width="29" height="28"/><rect x="125" y="6" width="29" height="28"/><rect x="5" y="46" width="29" height="28"/><rect x="45" y="46" width="29" height="28"/><rect x="85" y="46" width="29" height="28"/><rect x="125" y="46" width="29" height="28"/><rect x="5" y="86" width="29" height="28"/><rect x="45" y="86" width="29" height="28"/><rect x="85" y="86" width="29" height="28"/><rect x="125" y="86" width="29" height="28"/><rect x="5" y="126" width="29" height="28"/><rect x="45" y="126" width="29" height="28"/><rect x="85" y="126" width="29" height="28"/><rect x="125" y="126" width="29" height="28"/></g>
<path d="M10 27L28 10" stroke="#e01010" stroke-width="3" fill="none"/><path d="M12 29h18" stroke="#1010e0" stroke-width="3"/><path d="M25 24l-3-4M22 20h3M22 20v3" stroke="#111" fill="none"/>
<path d="M50 27l10-9" stroke="#1010e0" stroke-width="3"/><path d="M60 18l9-8" stroke="#e01010" stroke-width="3"/><path d="M62 26l4-4M66 22h-3M66 22v3" stroke="#111" fill="none"/>
<path d="M99 11c5 1 7 4 7 8s-3 7-9 8" fill="none" stroke="#111" stroke-width="2"/><path d="M94 27l6-4v8z" fill="#111"/>
<path d="M129 11h10M129 18h10M139 11v19" fill="none" stroke="#1010e0" stroke-width="2.500"/><path d="M144 30V11h10M144 19h9" fill="none" stroke="#e01010" stroke-width="3"/><path d="M141 9v22" stroke="#111"/>
<rect x="22" y="46" width="12" height="12" fill="#e01010"/><circle cx="28" cy="52" r="3.500" fill="#fff"/><rect x="7" y="62" width="11" height="11" fill="#fff" stroke="#1010e0"/><circle cx="12.500" cy="67.500" r="3.500" fill="#1010e0"/><path d="M18 60l3-3M21 57h-2M21 57v2" stroke="#111" fill="none"/>
<path d="M49 59h8" stroke="#e01010" stroke-width="3"/><path d="M57 59h6" stroke="#1010e0" stroke-width="3"/><path d="M63 59h8" stroke="#e01010" stroke-width="3"/>
<path d="M90 50v20M110 50v20" stroke="#111"/><path d="M91 60h18" stroke="#1010e0"/><rect x="96" y="54" width="8" height="12" fill="#cecece" stroke="#1010e0"/>
<path d="M129 51h11v5h11v15h-22z" fill="#1010e0"/><circle cx="134" cy="56" r="4.500" fill="#ccd"/><circle cx="144" cy="65" r="5" fill="#ccd"/>
<path d="M10 106l11-13 10 13z" fill="none" stroke="#e01010" stroke-width="2.500"/><path d="M9 108h22" stroke="#1010e0" stroke-width="3"/><path d="M21 104v-5M19 101l2-2 2 2" stroke="#111" fill="none"/>
<path d="M47 114l12-27 13 27" fill="none" stroke="#e01010" stroke-width="2.500"/><path d="M47 114l12-11 13 11" fill="none" stroke="#1010e0" stroke-width="2.500"/><path d="M59 99v-5M57 96l2-2 2 2" stroke="#111" fill="none"/>
<path d="M91 103l6-13h11l6 13" fill="none" stroke="#e01010" stroke-width="3"/><path d="M86 113l5-9h23l5 9M91 104h24" fill="none" stroke="#1010e0" stroke-width="3"/><path d="M102 100v-5M100 97l2-2 2 2" stroke="#111" fill="none"/>
<path d="M130 104l5-13h9l5 13" fill="none" stroke="#e01010" stroke-width="3"/><path d="M125 106h29" stroke="#1010e0" stroke-width="3"/><path d="M127 103l4 6M131 103l-4 6M149 103l4 6M153 103l-4 6M140 101v-5M138 98l2-2 2 2" stroke="#111" fill="none"/>
<path transform="translate(15 130)" d="M0 0L10 12 6 12.500 10 20 6.500 21.500 3 14-.5 17z" fill="#111"/>
<rect x="49" y="130" width="21" height="21" fill="none" stroke="#e01010" stroke-width="3"/><path transform="translate(55 132)" d="M0 0L10 12 6 12.500 10 20 6.500 21.500 3 14-.5 17z" fill="#111"/>
<path d="M96 129h12l6 6v10l-6 6H96l-6-6v-10z" fill="none" stroke="#e01010" stroke-width="3"/><path transform="translate(96 131)" d="M0 0L10 12 6 12.500 10 20 6.500 21.500 3 14-.5 17z" fill="#111"/>
<path d="M131 135v6M131 149h7v-14h9" fill="none" stroke="#111"/><circle cx="131" cy="141" r="3" fill="#e01010"/><circle cx="149" cy="132" r="3" fill="#20c040"/><circle cx="130" cy="149" r="3" fill="#20c040"/><path transform="translate(143 134)" d="M0 0L10 12 6 12.500 10 20 6.500 21.500 3 14-.5 17z" fill="#111"/>
</svg>
<div style="left:1277px;top:484px;width:163px;height:240px;background:#000;border-left:1px solid #3f7f70;border-top:1px solid #52c4a4"></div>
<div style="left:1278px;top:554px;width:162px;height:102px;border:1px solid #3f7f30;border-right:none"></div>
<div style="left:1301px;top:580px;width:32px;height:20px;background:#f00"></div>
<div style="left:1305px;top:580px;width:21px;height:17px;border:2px solid #40d0d8;border-bottom-color:#b0b0b0"></div>
<div style="left:1277px;top:724px;width:163px;height:46px;background:#52c4a4;border:1px solid #b8e8e0"></div>
<div class="m" style="left:1281px;top:734px;font-size:14px;line-height:15px;letter-spacing:.6px">X = 13.069300"
Y = 17.396061"</div>

<!-- Bottom bars -->
<div style="left:0;top:771px;width:1440px;height:33px;background:#fffcd8;border-bottom:2px solid #000"></div>
<div style="left:0;top:804px;width:1440px;height:31px;background:#fffcd8;border-top:2px solid #3f7f70"></div>
<div style="left:1px;top:806px;width:1438px;height:28px;background:#000"></div>
<div style="left:2px;top:806px;width:1436px;height:28px;background:#b0ffff;border:2px solid;border-color:#e0ffff #3f8f80 #3f8f80 #e0ffff;outline:1px solid #123"></div>
<div class="m" style="left:629px;top:812px;font-size:11.7px;line-height:15px">3</div>
<div style="left:0;top:835px;width:1440px;height:12px;background:#fffcd8"></div>
<div style="left:0;top:847px;width:1440px;height:4px;background:#d4d0c8;border-top:1px solid #bbb"></div>
<div style="left:33px;top:771px;width:1px;height:32px;background:#000"></div>
<div style="left:65px;top:771px;width:1px;height:32px;background:#000"></div>
<div style="left:5px;top:775px;width:26px;height:25px;border:2px solid #c8c8a0;background:#fffcd8"></div>
<div style="left:37px;top:775px;width:26px;height:25px;border:2px solid #c8c8a0;background:#fffcd8"></div>
<div style="left:66px;top:771px;width:28px;height:32px;background:#52a890"></div>
<div style="left:69px;top:775px;width:22px;height:25px;background:#fffcd8;border:2px solid #c8c8a0"></div>
<svg class="a" style="left:5px;top:775px" width="90" height="25" fill="none" stroke="#111"><rect x="4" y="4" width="17" height="17"/><path d="M7 7l11 11M7 7v4M7 7h4M18 18v-4M18 18h-4"/><rect x="36" y="4" width="17" height="17"/><path d="M38 20l12-14M40 8h4M42 17h8"/><path d="M69 13v8h14V5h-9l-5 5v3h14M76 6v15" stroke-width="1"/></svg>
<div class="m" style="left:98px;top:781px;font-size:11.7px;line-height:15px">X Y :</div>
<div style="left:143px;top:771px;width:1px;height:32px;background:#888"></div>
<div style="left:146px;top:773px;width:169px;height:28px;background:#fffcd8;border:2px solid #c0c098"></div>
<div style="left:151px;top:778px;width:1px;height:14px;border-left:1px dotted #333"></div>
<div style="left:316px;top:771px;width:32px;height:32px;background:#52a890"></div>
<div style="left:320px;top:775px;width:24px;height:25px;background:#fffcd8;border:2px solid #c8c8a0"></div>
<div style="left:324px;top:778px;width:16px;height:19px;border:1px solid #111"></div>
<div class="m" style="left:329px;top:780px;font-size:13px;line-height:15px;font-weight:normal">!</div>
<div class="m" style="left:352px;top:781px;font-size:11.7px;line-height:15px">&lt;M1&gt; - Select first area corner</div>
<div style="left:1360px;top:771px;width:78px;height:33px;background:#52c4a4;border:2px solid #000"></div>
<div style="left:1287px;top:773px;width:148px;height:23px;background:linear-gradient(#fff,#e8eef8);border:1px solid #c8c8c8"></div>
<div style="left:1289px;top:775px;width:18px;height:18px;background:#e04a10;border-radius:4px"></div>
<div class="s" style="left:1292px;top:775px;font:bold 14px/18px 'Liberation Sans',sans-serif;color:#fff">S</div>
<div class="s" style="left:1311px;top:774px;font-size:15px;line-height:20px;color:#3f80c8;font-family:'Noto Sans CJK SC',sans-serif">中</div>
<svg class="a" style="left:1330px;top:775px" width="104" height="20"><path d="M13 2c2 9-3 14-11 13 5 5 15 3 15-5 0-4-2-7-4-8z" fill="#4a88c8"/><circle cx="28" cy="5" r="2" fill="none" stroke="#4a88c8"/><path d="M37 13l-2 4" stroke="#4a88c8" stroke-width="2"/><rect x="41" y="4" width="17" height="12" fill="#fff" stroke="#4a88c8" stroke-width="1.500"/><path d="M43 8h13M43 11h13" stroke="#4a88c8" stroke-dasharray="2 1"/><circle cx="69" cy="6" r="3.500" fill="#999"/><path d="M63 16c0-8 12-8 12 0z" fill="#999"/><path d="M82 15l8-8c-1-3 1-5 4-5l-2 3 2 2 3-2c0 3-2 5-5 4l-7 8z" fill="#4a88c8" stroke="#4a88c8"/></svg>
</div></body></html>
